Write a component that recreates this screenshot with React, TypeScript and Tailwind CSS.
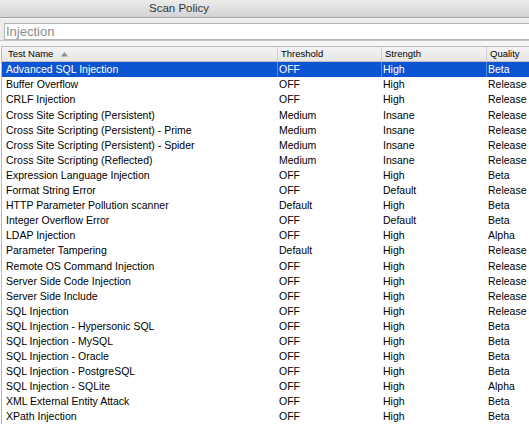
import React from "react";

const rows = [
  ["Advanced SQL Injection", "OFF", "High", "Beta"],
  ["Buffer Overflow", "OFF", "High", "Release"],
  ["CRLF Injection", "OFF", "High", "Release"],
  ["Cross Site Scripting (Persistent)", "Medium", "Insane", "Release"],
  ["Cross Site Scripting (Persistent) - Prime", "Medium", "Insane", "Release"],
  ["Cross Site Scripting (Persistent) - Spider", "Medium", "Insane", "Release"],
  ["Cross Site Scripting (Reflected)", "Medium", "Insane", "Release"],
  ["Expression Language Injection", "OFF", "High", "Beta"],
  ["Format String Error", "OFF", "Default", "Release"],
  ["HTTP Parameter Pollution scanner", "Default", "High", "Beta"],
  ["Integer Overflow Error", "OFF", "Default", "Beta"],
  ["LDAP Injection", "OFF", "High", "Alpha"],
  ["Parameter Tampering", "Default", "High", "Release"],
  ["Remote OS Command Injection", "OFF", "High", "Release"],
  ["Server Side Code Injection", "OFF", "High", "Release"],
  ["Server Side Include", "OFF", "High", "Release"],
  ["SQL Injection", "OFF", "High", "Release"],
  ["SQL Injection - Hypersonic SQL", "OFF", "High", "Beta"],
  ["SQL Injection - MySQL", "OFF", "High", "Beta"],
  ["SQL Injection - Oracle", "OFF", "High", "Beta"],
  ["SQL Injection - PostgreSQL", "OFF", "High", "Beta"],
  ["SQL Injection - SQLite", "OFF", "High", "Alpha"],
  ["XML External Entity Attack", "OFF", "High", "Beta"],
  ["XPath Injection", "OFF", "High", "Beta"],
];

const cols = "grid grid-cols-[275px_104px_105px_1fr]";

export default function App() {
  return (
    <div
      className="w-[529px] h-[432px] overflow-hidden bg-white text-black"
      style={{ fontFamily: '"Liberation Sans", Arial, sans-serif' }}
    >
      <div className="h-[18px] bg-gradient-to-b from-[#ebebeb] to-[#d4d4d4] border-b border-[#a3a3a3] flex items-center pl-[149px]">
        <span className="text-[11.5px] text-[#333] leading-none">Scan Policy</span>
      </div>
      <div className="bg-[#ececec] border-t border-[#f7f7f7] pt-[4px] pl-[4px]">
        <div className="h-[17px] bg-white border border-[#b4b4b4] border-r-0 flex items-center pl-[1px]">
          <span className="text-[13px] text-[#8c8c8c] leading-none">Injection</span>
        </div>
      </div>
      <div className="h-[6px] bg-[#f6f6f6] border-t border-[#c4c4c4]" />
      <div className="ml-px border-l border-t border-[#b9b9b9]">
        <div className={`${cols} h-[15px] bg-gradient-to-b from-[#f4f4f4] to-[#e6e6e6] border-b border-[#c2c2c2] text-[9.5px] leading-none`}>
          <div className="flex items-center pl-[6px] gap-[8px]">
            <span>Test Name</span>
            <svg width="7" height="5" viewBox="0 0 7 5">
              <polygon points="3.5,0 7,4.5 0,4.5" fill="#8f8f8f" />
            </svg>
          </div>
          <div className="flex items-center pl-[3px] border-l border-[#d2d2d2]">Threshold</div>
          <div className="flex items-center pl-[3px] border-l border-[#d2d2d2]">Strength</div>
          <div className="flex items-center pl-[3px] border-l border-[#d2d2d2]">Quality</div>
        </div>
        {rows.map((r, i) => {
          const sel = i === 0;
          return (
            <div
              key={r[0]}
              className={`${cols} h-[15.1px] text-[10.5px] leading-none ${sel ? "bg-[#0c54d2] text-white" : ""}`}
            >
              <div className="flex items-center pl-[4px] whitespace-nowrap">{r[0]}</div>
              <div className={`flex items-center pl-[1px] border-l ${sel ? "border-[#5587e0]" : "border-transparent"}`}>{r[1]}</div>
              <div className={`flex items-center pl-[1px] border-l ${sel ? "border-[#5587e0]" : "border-transparent"}`}>{r[2]}</div>
              <div className={`flex items-center pl-[1px] border-l ${sel ? "border-[#5587e0]" : "border-transparent"}`}>{r[3]}</div>
            </div>
          );
        })}
      </div>
    </div>
  );
}
